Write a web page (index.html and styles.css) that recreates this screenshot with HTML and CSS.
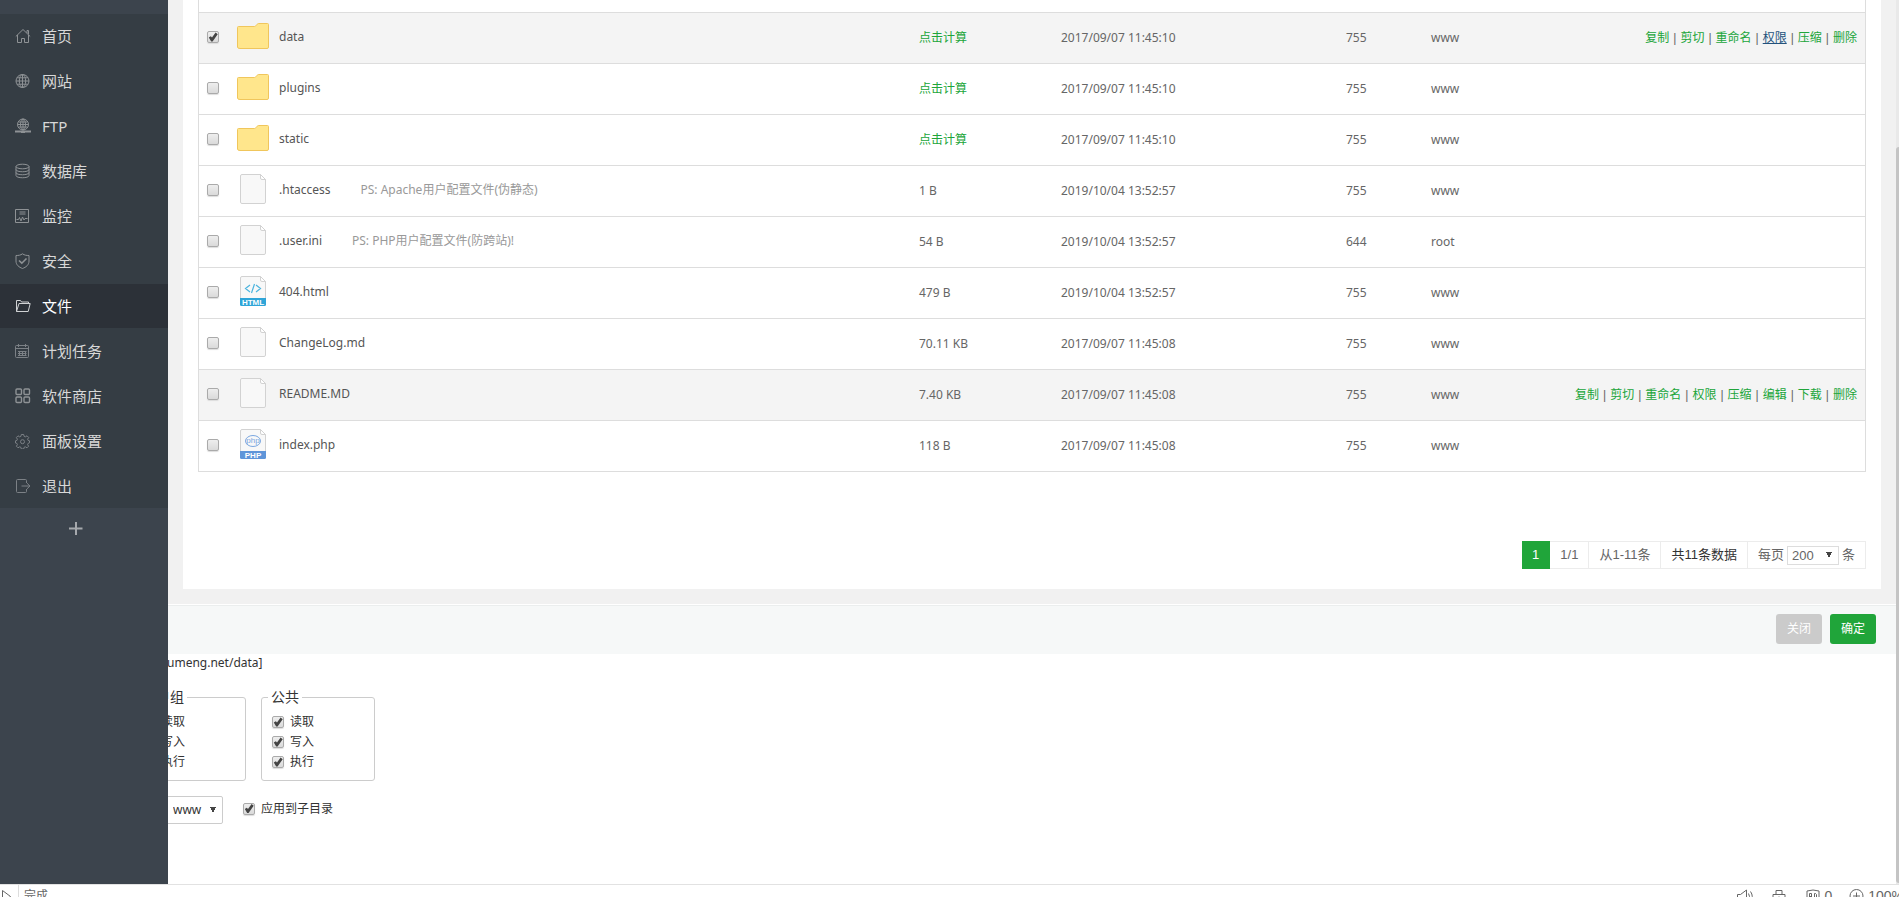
FILE: index.html
```
<!DOCTYPE html>
<html lang="zh-CN">
<head>
  <meta charset="utf-8">
  <title>文件</title>
  <link rel="stylesheet" href="styles.css">
</head>
<body>

<svg class="sprite" aria-hidden="true">
  <symbol id="folder" viewBox="0 0 32 30">
    <path d="M.5 26V6.500q0-1 1-1h16q1 0 1.500-1l1-1q.5-1 1.500-1h9q1 0 1 1V26q0 1.500-1.500 1.500h-27Q.5 27.500.5 26z" fill="#ffe68c" stroke="#f0c65c"/>
  </symbol>
  <symbol id="page" viewBox="0 0 32 30">
    <path d="M3.500 2q0-1.500 1.500-1.500h18.500l5 5V28q0 1.500-1.500 1.500H5q-1.500 0-1.500-1.500z" fill="#f8f8f8" stroke="#d2d2d2"/>
    <path d="M23.500.5V4q0 1.500 1.500 1.500h3.500z" fill="#fff" stroke="#d2d2d2"/>
  </symbol>
</svg>

<div class="workspace">

  <nav class="sidebar">
    <ul class="menu">
      <li><a href="#"><svg class="icon" viewBox="0 0 16 16"><path d="M.8 8.500 8 1.500l7.200 7M2.500 7v7.500h4v-4h3v4h4V7M12 5V2.500h1.500v4"/></svg>首页</a></li>
      <li><a href="#"><svg class="icon" viewBox="0 0 16 16"><circle cx="7.500" cy="8" r="6.500"/><ellipse cx="7.500" cy="8" rx="3.200" ry="6.500"/><path d="M7.500 1.500v13M1 8h13M2 4.800h11M2 11.200h11"/></svg>网站</a></li>
      <li><a href="#"><svg class="icon" viewBox="0 0 16 16"><circle cx="8" cy="6.500" r="5.500"/><ellipse cx="8" cy="6.500" rx="2.500" ry="5.500"/><path d="M8 1v11M2.500 6.500h11M3.500 4h9M3.500 9h9"/><path d="M0 13.500h16M6 14h4" stroke-width="1.800"/></svg>FTP</a></li>
      <li><a href="#"><svg class="icon" viewBox="0 0 16 16"><ellipse cx="7.500" cy="3.500" rx="6.500" ry="2.300"/><path d="M1 3.500v9c0 3 13 3 13 0v-9M1 6.500c0 3 13 3 13 0M1 9.500c0 3 13 3 13 0"/></svg>数据库</a></li>
      <li><a href="#"><svg class="icon" viewBox="0 0 16 16"><path d="M.5 1.500h13v13H.5zM4.500 4h6M4.500 6h6M1.500 11.500h2l1-2 1.500 3.500L7.500 9 9 12l1-1.500h2.500"/></svg>监控</a></li>
      <li><a href="#"><svg class="icon" viewBox="0 0 16 16"><path d="M7.500.8C5.500 2.300 3.500 2.500 1 2.500V8c0 4 3 6.200 6.500 7.500C11 14.200 14 12 14 8V2.500c-2.500 0-4.500-.2-6.500-1.700z"/><path d="m4 7.500 2.800 2.700L11.500 5.500" stroke-width="1.600"/></svg>安全</a></li>
      <li class="current"><a href="#"><svg class="icon" viewBox="0 0 16 16"><path d="M1.500 13.500V2.500h4l1 1.500h7v2M1.500 13.500l2.500-8h11.200l-2 8z"/></svg>文件</a></li>
      <li><a href="#"><svg class="icon dim" viewBox="0 0 16 16"><rect x=".5" y="2.500" width="13" height="12" rx="1"/><path d="M.5 5.500h13M3.500 1v3M10.500 1v3M3 8.500h8.500M3 10.500h8.500M3 12.500h8.500M4.500 8v5M7.500 8v5M10.500 8v5"/></svg>计划任务</a></li>
      <li><a href="#"><svg class="icon" viewBox="0 0 16 16"><g stroke-width="1.400"><rect x="1" y="1" width="5.500" height="5.500" rx="1"/><rect x="9" y="1" width="5.500" height="5.500" rx="1"/><rect x="1" y="9" width="5.500" height="5.500" rx="1"/><rect x="9" y="9" width="5.500" height="5.500" rx="1"/></g></svg>软件商店</a></li>
      <li><a href="#"><svg class="icon dim" viewBox="0 0 16 16"><path d="M6.300 1.500h2.400l.4 1.900 1.200.5L12 2.800l1.700 1.700-1.100 1.700.5 1.200 1.400.4v2l-1.400.6-.5 1.200 1 1.600-1.600 1.600-1.700-1-1.200.5-.4 1.700H6.300l-.4-1.700-1.200-.5-1.700 1-1.600-1.600 1-1.600-.5-1.200-1.400-.4v-2.200l1.400-.4.500-1.200-1-1.700L3 2.800l1.700 1.100 1.200-.5z"/><circle cx="7.500" cy="8.700" r="2"/></svg>面板设置</a></li>
      <li><a href="#"><svg class="icon dim" viewBox="0 0 16 16"><path d="M11.500 5V2.500q0-1-1-1h-8q-1 0-1 1v11q0 1 1 1h8q1 0 1-1V11M6.500 8H15M12 5.200 15 8l-3 2.800"/></svg>退出</a></li>
    </ul>
    <button class="add" type="button" aria-label="添加"><svg viewBox="0 0 14 14"><path d="M7 0v13M0 6.500h13.500"/></svg></button>
  </nav>

  <main class="main">

    <section class="panel">
      <table class="files">
        <colgroup>
          <col class="c-check"><col class="c-name"><col class="c-size"><col class="c-date"><col class="c-mode"><col class="c-owner"><col class="c-ops">
        </colgroup>
        <tbody>
          <tr class="partial"><td colspan="7"></td></tr>
          <tr class="active">
            <td><input type="checkbox" aria-label="data" checked></td>
            <td class="name"><div><svg><use href="#folder"/></svg><span>data</span></div></td>
            <td><a href="#">点击计算</a></td><td>2017/09/07 11:45:10</td><td>755</td><td>www</td>
            <td class="ops"><div><a href="#">复制</a><i>|</i><a href="#">剪切</a><i>|</i><a href="#">重命名</a><i>|</i><a href="#" class="over">权限</a><i>|</i><a href="#">压缩</a><i>|</i><a href="#">删除</a></div></td>
          </tr>
          <tr>
            <td><input type="checkbox" aria-label="plugins"></td>
            <td class="name"><div><svg><use href="#folder"/></svg><span>plugins</span></div></td>
            <td><a href="#">点击计算</a></td><td>2017/09/07 11:45:10</td><td>755</td><td>www</td><td></td>
          </tr>
          <tr>
            <td><input type="checkbox" aria-label="static"></td>
            <td class="name"><div><svg><use href="#folder"/></svg><span>static</span></div></td>
            <td><a href="#">点击计算</a></td><td>2017/09/07 11:45:10</td><td>755</td><td>www</td><td></td>
          </tr>
          <tr>
            <td><input type="checkbox" aria-label=".htaccess"></td>
            <td class="name"><div><svg><use href="#page"/></svg><span>.htaccess</span><span class="ps">PS: Apache用户配置文件(伪静态)</span></div></td>
            <td>1 B</td><td>2019/10/04 13:52:57</td><td>755</td><td>www</td><td></td>
          </tr>
          <tr>
            <td><input type="checkbox" aria-label=".user.ini"></td>
            <td class="name"><div><svg><use href="#page"/></svg><span>.user.ini</span><span class="ps">PS: PHP用户配置文件(防跨站)!</span></div></td>
            <td>54 B</td><td>2019/10/04 13:52:57</td><td>644</td><td>root</td><td></td>
          </tr>
          <tr>
            <td><input type="checkbox" aria-label="404.html"></td>
            <td class="name"><div><svg viewBox="0 0 32 30"><use href="#page"/><path d="m13 9-4.500 3.500L13 16M19 9l4.500 3.500L19 16M17.500 8l-3 9" fill="none" stroke="#4cb4de" stroke-width="1.200"/><path d="M3 22h26v6.500q0 1.500-1.500 1.500h-23Q3 30 3 28.500z" fill="#2fa5d8"/><text x="16" y="29" class="tag">HTML</text></svg><span>404.html</span></div></td>
            <td>479 B</td><td>2019/10/04 13:52:57</td><td>755</td><td>www</td><td></td>
          </tr>
          <tr>
            <td><input type="checkbox" aria-label="ChangeLog.md"></td>
            <td class="name"><div><svg><use href="#page"/></svg><span>ChangeLog.md</span></div></td>
            <td>70.11 KB</td><td>2017/09/07 11:45:08</td><td>755</td><td>www</td><td></td>
          </tr>
          <tr class="active">
            <td><input type="checkbox" aria-label="README.MD"></td>
            <td class="name"><div><svg><use href="#page"/></svg><span>README.MD</span></div></td>
            <td>7.40 KB</td><td>2017/09/07 11:45:08</td><td>755</td><td>www</td>
            <td class="ops"><div><a href="#">复制</a><i>|</i><a href="#">剪切</a><i>|</i><a href="#">重命名</a><i>|</i><a href="#">权限</a><i>|</i><a href="#">压缩</a><i>|</i><a href="#">编辑</a><i>|</i><a href="#">下载</a><i>|</i><a href="#">删除</a></div></td>
          </tr>
          <tr>
            <td><input type="checkbox" aria-label="index.php"></td>
            <td class="name"><div><svg viewBox="0 0 32 30"><use href="#page"/><ellipse cx="16" cy="12" rx="7.500" ry="5.500" fill="none" stroke="#7ba7e0"/><text x="16" y="14" class="php">php</text><path d="M3 22h26v6.500q0 1.500-1.500 1.500h-23Q3 30 3 28.500z" fill="#5f95d9"/><text x="16" y="29" class="tag">PHP</text></svg><span>index.php</span></div></td>
            <td>118 B</td><td>2017/09/07 11:45:08</td><td>755</td><td>www</td><td></td>
          </tr>
        </tbody>
      </table>

      <div class="pager">
        <span class="on">1</span>
        <span>1/1</span>
        <span>从1-11条</span>
        <span class="total">共11条数据</span>
        <span class="per"><label for="per">每页</label><select id="per"><option>200</option></select>条</span>
      </div>
    </section>

    <section class="dialog">
      <div class="actions">
        <button type="button" class="close">关闭</button>
        <button type="button">确定</button>
      </div>
      <div class="perm">
        <p class="path">umeng.net/data]</p>
        <div class="groups">
          <fieldset>
            <legend>用户组</legend>
            <label><input type="checkbox" checked>读取</label>
            <label><input type="checkbox" checked>写入</label>
            <label><input type="checkbox" checked>执行</label>
          </fieldset>
          <fieldset>
            <legend>公共</legend>
            <label><input type="checkbox" checked>读取</label>
            <label><input type="checkbox" checked>写入</label>
            <label><input type="checkbox" checked>执行</label>
          </fieldset>
        </div>
        <div class="owner">
          <select aria-label="所有者"><option>www</option></select>
          <label><input type="checkbox" checked>应用到子目录</label>
        </div>
      </div>
    </section>

  </main>

  <div class="scroll"><div class="thumb"></div></div>
</div>

<footer class="status">
  <svg class="play" viewBox="0 0 18 22"><path d="M2.500 5.500v12l8-6z"/></svg>
  <span class="done">完成</span>
  <div class="tools">
    <svg viewBox="0 0 18 22"><path d="M1.500 9.500h3L10.500 5v13l-6-4.500h-3zM12.500 8.500q2 3 0 6M14.500 6.500q3.500 5 0 10"/></svg>
    <svg viewBox="0 0 18 22"><path d="M3 9.500h12v9H3zM6 9.500v-4h6v4M9 11.500v4"/></svg>
    <span><svg viewBox="0 0 18 22"><path d="M3 6q6-2 12 0v8q-1 4-6 5-5-1-6-5z"/><path d="M5.500 14V8.500h2V14M5.500 11.500h2M10.500 8.500h1l1 1v3.500l-1 1h-1z"/></svg>0</span>
    <span><svg viewBox="0 0 18 22"><circle cx="8.500" cy="11" r="6.500"/><path d="M5 11h7M8.500 7.500v7"/></svg>100%</span>
  </div>
</footer>

</body>
</html>
```
FILE: styles.css
```
* {
  box-sizing: border-box;
}

body {
  margin: 0;
  height: 100vh;
  display: flex;
  flex-direction: column;
  overflow: hidden;
  background: #fff;
  color: #333;
  font: 12px/20px "Noto Sans", "Noto Sans CJK SC", sans-serif;
}

a {
  color: #20a53a;
  text-decoration: none;
}

button, select, input {
  font: inherit;
  margin: 0;
}

.sprite {
  display: none;
}

.workspace {
  flex: 1;
  display: flex;
  min-height: 0;
}

/* sidebar */
.sidebar {
  width: 168px;
  flex: none;
  padding-top: 14px;
  background: #3c444d;
}

.menu {
  list-style: none;
  margin: 0;
  padding: 0;
  display: flex;
  flex-direction: column;
  gap: 1px;
  background: #353d44;
}

.menu a {
  display: flex;
  align-items: center;
  height: 44px;
  padding-left: 15px;
  gap: 11px;
  color: #d8d8d8;
  font-size: 15px;
}

.menu .current {
  background: #2c3138;
}

.menu .current a {
  color: #fff;
}

.icon {
  width: 16px;
  height: 16px;
  fill: none;
  stroke: #8e9295;
}

.icon.dim {
  stroke: #7c8186;
}

.current .icon {
  stroke: #d0d2d4;
}

.add {
  display: block;
  width: 152px;
  height: 42px;
  padding: 6px 0 0;
  border: 0;
  background: none;
}

.add svg {
  width: 14px;
  height: 14px;
  stroke: #a6a9ad;
  stroke-width: 2;
}

/* main */
.main {
  flex: 1;
  min-width: 0;
  overflow: hidden;
  background: #f1f1f1;
}

.panel {
  margin: 0 15px 15px;
  padding: 0 15px 20px;
  background: #fff;
}

.files {
  width: 100%;
  table-layout: fixed;
  border: 1px solid #ddd;
  border-top: 0;
  border-spacing: 0;
  color: #666;
}

.c-check { width: 30px; }
.c-size { width: 142px; }
.c-date { width: 285px; }
.c-mode { width: 85px; }
.c-owner { width: 60px; }
.c-ops { width: 382px; }

.files td {
  height: 51px;
  padding: 0 8px;
  border-top: 1px solid #ddd;
}

.files td:first-child {
  padding-bottom: 2px;
}

.files .partial td {
  height: 12px;
  border: 0;
}

.files .active {
  background: #f4f4f4;
}

.files .name {
  padding-top: 8px;
  vertical-align: top;
  color: #555;
}

.name div {
  display: flex;
}

.name svg {
  width: 32px;
  height: 30px;
  margin-right: 10px;
}

.name span {
  line-height: 32px;
}

.name .ps {
  margin-left: 30px;
  color: #999;
}

.tag {
  fill: #fff;
  font: bold 8px "Liberation Sans", sans-serif;
  text-anchor: middle;
}

.php {
  fill: #7ba7e0;
  font: 8px "Liberation Sans", sans-serif;
  text-anchor: middle;
}

.ops div {
  display: flex;
  justify-content: flex-end;
  gap: 4px;
}

.ops i {
  font-family: "Liberation Sans", sans-serif;
  font-style: normal;
}

.ops .over {
  color: #23527c;
  text-decoration: underline;
}

input[type="checkbox"] {
  appearance: none;
  display: block;
  width: 12px;
  height: 12px;
  border: 1px solid #aaa;
  border-radius: 2px;
  background: linear-gradient(#eee, #dadada);
  box-shadow: 0 1px 1px #ddd;
}

input[type="checkbox"]:checked::before {
  content: "";
  display: block;
  height: 10px;
  background: #444;
  clip-path: polygon(8% 55%, 28% 42%, 40% 56%, 76% 6%, 97% 22%, 46% 94%, 32% 94%);
}

/* pagination */
.pager {
  display: flex;
  justify-content: flex-end;
  margin-top: 69px;
  color: #666;
  font: 13px/26px "Liberation Sans", "Noto Sans CJK SC", sans-serif;
}

.pager > span {
  height: 28px;
  padding: 0 10px;
  border: 1px solid #ececec;
  border-left: 0;
}

.pager .on {
  border-color: #20a53a;
  background: #20a53a;
  color: #fff;
}

.pager .total {
  color: #333;
}

.pager .per {
  display: flex;
  align-items: center;
  gap: 3px;
}

/* down arrow made of two triangles */
select {
  appearance: none;
  border: 1px solid #ddd;
  color: #666;
  background:
    linear-gradient(to bottom left, #444 50%, transparent 50%) right 9px center / 3px 6px no-repeat,
    linear-gradient(to bottom right, #444 50%, transparent 50%) right 6px center / 3px 6px no-repeat;
}

.per select {
  width: 52px;
  height: 19px;
  padding: 0 4px;
  line-height: 17px;
}

/* permission dialog */
.dialog {
  border-top: 1px solid #fff;
  background: #fff;
}

.actions {
  display: flex;
  justify-content: flex-end;
  gap: 8px;
  padding: 8px 20px 10px;
  border-top: 1px solid #ebeeee;
  background: #f6f8f8;
}

.actions button {
  width: 46px;
  height: 30px;
  padding: 0;
  border: 0;
  border-radius: 3px;
  background: #20a53a;
  color: #fff;
}

.actions .close {
  background: #cbcbcb;
}

/* slides under the sidebar */
.perm {
  height: 100vh;
  margin-left: -36px;
}

.path {
  margin: 0;
  padding-left: 35px;
  line-height: 18px;
}

.groups {
  display: flex;
  gap: 15px;
  margin-top: 15px;
}

fieldset {
  width: 114px;
  margin: 0;
  padding: 5px 10px 8px;
  border: 1px solid #ccc;
  border-radius: 3px;
}

legend {
  margin-left: -4px;
  padding: 0 3px;
  font-size: 14px;
}

fieldset label, .owner label {
  display: flex;
  align-items: center;
  gap: 6px;
}

.owner {
  display: flex;
  gap: 20px;
  margin: 15px 0 0 26px;
}

.owner select {
  width: 65px;
  height: 28px;
  padding: 0 14px;
  border-color: #ccc;
  border-radius: 2px;
  color: #333;
}

.owner label {
  height: 25px;
}

/* page scrollbar */
.scroll {
  width: 3px;
  display: flex;
  background: #e9e9e9;
}

.thumb {
  flex: 1;
  margin: 147px 0 1px;
  border-top-left-radius: 3px;
  border-bottom-left-radius: 3px;
  background: #c4c4c4;
}

/* browser status bar */
.status {
  flex: none;
  display: flex;
  height: 13px;
  overflow: hidden;
  border-top: 1px solid #e2e2e2;
  background: #fff;
  color: #666;
  line-height: 22px;
}

.status svg {
  flex: none;
  width: 18px;
  height: 22px;
  fill: none;
  stroke: #666;
}

.done {
  padding-left: 5px;
  border-left: 1px solid #ddd;
}

.tools {
  display: flex;
  gap: 16px;
  margin: 0 -5px 0 auto;
  font: 14px/22px "Liberation Sans", sans-serif;
}

.tools span {
  display: flex;
  gap: 2px;
}
```
